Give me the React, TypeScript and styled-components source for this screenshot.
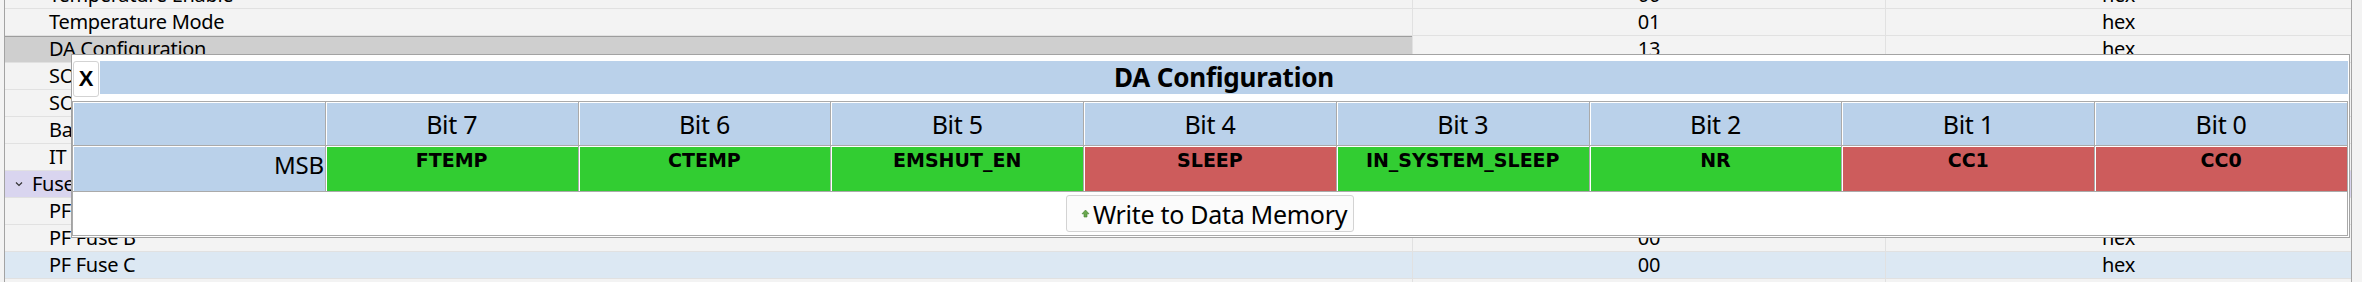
import React from 'react';
import styled, { createGlobalStyle } from 'styled-components';

const GlobalStyle = createGlobalStyle`
    html, body {
        margin: 0;
        padding: 0;
    }
    body {
        background: #f3f3f3;
        font-family: 'Noto Sans', 'Open Sans', sans-serif;
        color: #000;
        overflow: hidden;
    }
`;

const Page = styled.div`
    position: relative;
    width: 2362px;
    height: 282px;
    overflow: hidden;
    background: #f3f3f3;
`;

const Grid = styled.div`
    margin: -18px 0 0 4px;
    width: 2348px;
    box-sizing: border-box;
    border-left: 1px solid #a3a3a3;
    border-right: 1px solid #a3a3a3;
`;

type RowKind = 'plain' | 'group' | 'alt';

const rowBg: Record<RowKind, string> = {
    plain: '#f3f3f3',
    group: '#d9d5ef',
    alt: '#dce8f3',
};

const Row = styled.div<{ $kind: RowKind }>`
    display: grid;
    grid-template-columns: 1407px 473px 1fr;
    height: 27px;
    box-sizing: border-box;
    border-bottom: 1px solid #e1e1e1;
    background: ${(p) => rowBg[p.$kind]};
    font-size: 20px;
    line-height: 26px;
    letter-spacing: -0.3px;
`;

const NameCell = styled.div<{ $selected?: boolean }>`
    padding-left: 44px;
    white-space: nowrap;
    overflow: hidden;
    background: ${(p) => (p.$selected ? '#cfcfcf' : 'transparent')};
    box-shadow: ${(p) => (p.$selected ? 'inset 0 1px 0 #9d9d9d' : 'none')};
`;

const GroupCell = styled.div`
    display: flex;
    align-items: center;
    gap: 9px;
    padding-left: 10px;
    white-space: nowrap;
`;

const ValueCell = styled.div`
    text-align: center;
    border-left: 1px solid #e1e1e1;
`;

const Popup = styled.div`
    position: absolute;
    left: 71px;
    top: 54px;
    width: 2279px;
    box-sizing: border-box;
    border: 1px solid #a3a3a3;
    background: #fff;
    padding: 6px 1px 1px 0;
`;

const TitleRow = styled.div`
    display: flex;
    align-items: flex-start;
    gap: 1px;
    height: 36px;
`;

const CloseButton = styled.button`
    width: 26px;
    height: 36px;
    margin-left: 1px;
    padding: 0;
    border: 1px solid #d3d3d3;
    border-radius: 3px;
    background: #fff;
    font-family: 'Liberation Sans', Arial, sans-serif;
    font-weight: bold;
    font-size: 22px;
    line-height: 34px;
    color: #000;
`;

const TitleBar = styled.div`
    flex: 1;
    height: 33px;
    background: #bad1ea;
    text-align: center;
    font-weight: bold;
    font-size: 26px;
    line-height: 33px;
    letter-spacing: -0.2px;
`;

const BitTable = styled.table`
    margin-top: 4px;
    width: 2276px;
    table-layout: fixed;
    border-collapse: collapse;
`;

const TableRow = styled.tr<{ $h: number }>`
    height: ${(p) => p.$h}px;
`;

const HeadCell = styled.td`
    padding: 0;
    border: 1px solid #aaaaaa;
    background: #bad1ea;
    text-align: center;
    font-size: 25px;
    letter-spacing: -0.3px;
    box-shadow: inset 1px 1px 0 #fff;
`;

const SideCell = styled(HeadCell)`
    text-align: right;
    padding-right: 1px;
    padding-bottom: 8px;
    font-size: 24px;
`;

const FlagCell = styled.td<{ $on: boolean }>`
    padding: 3px 0 0;
    border: 1px solid #aaaaaa;
    background: ${(p) => (p.$on ? '#32cd32' : '#cd5c5c')};
    vertical-align: top;
    text-align: center;
    font-family: 'DejaVu Sans', Verdana, sans-serif;
    font-weight: bold;
    font-size: 19px;
    box-shadow: inset 1px 1px 0 #fff;
`;

const ActionCell = styled.td`
    padding: 0;
    border: 1px solid #aaaaaa;
    text-align: center;
    vertical-align: middle;
`;

const WriteButton = styled.button`
    display: inline-flex;
    align-items: center;
    gap: 3px;
    height: 37px;
    padding: 0 6px 0 14px;
    border: 1px solid #d3d3d3;
    border-radius: 3px;
    background: #fbfbfb;
    font-family: 'Noto Sans', 'Open Sans', sans-serif;
    font-size: 25px;
    letter-spacing: -0.3px;
    color: #000;
`;

type GridRow = {
    name: string;
    value?: string;
    type?: string;
    kind?: RowKind;
    selected?: boolean;
    group?: boolean;
};

const rows: GridRow[] = [
    { name: 'Temperature Enable', value: '00', type: 'hex' },
    { name: 'Temperature Mode', value: '01', type: 'hex' },
    { name: 'DA Configuration', value: '13', type: 'hex', selected: true },
    { name: 'SOC1 Set Threshold', value: '96', type: 'hex' },
    { name: 'SOC1 Clear Threshold', value: 'AF', type: 'hex' },
    { name: 'Battery Low %', value: '00', type: 'hex' },
    { name: 'IT Enable', value: '00', type: 'hex' },
    { name: 'Fuses', kind: 'group', group: true },
    { name: 'PF Fuse A', value: '00', type: 'hex' },
    { name: 'PF Fuse B', value: '00', type: 'hex' },
    { name: 'PF Fuse C', value: '00', type: 'hex', kind: 'alt' },
    { name: 'PF Fuse D', value: '00', type: 'hex' },
];

const bits = [
    { label: 'FTEMP', on: true },
    { label: 'CTEMP', on: true },
    { label: 'EMSHUT_EN', on: true },
    { label: 'SLEEP', on: false },
    { label: 'IN_SYSTEM_SLEEP', on: true },
    { label: 'NR', on: true },
    { label: 'CC1', on: false },
    { label: 'CC0', on: false },
];

const Chevron = () => (
    <svg width="8" height="6" viewBox="0 0 8 6">
        <path d="M1 1.5 L4 4.5 L7 1.5" fill="none" stroke="#333" strokeWidth="1.2" />
    </svg>
);

const UpArrow = () => (
    <svg width="9" height="9" viewBox="0 0 9 9">
        <path d="M4.5 1 L8 4.8 L6 4.8 L6 8 L3 8 L3 4.8 L1 4.8 Z" fill="#6aa84f" stroke="#3f7f2a" strokeWidth="0.6" />
    </svg>
);

export default function App() {
    return (
        <Page>
            <GlobalStyle />
            <Grid>
                {rows.map((r) => (
                    <Row key={r.name} $kind={r.kind ?? 'plain'}>
                        {r.group ? (
                            <GroupCell>
                                <Chevron />
                                {r.name}
                            </GroupCell>
                        ) : (
                            <NameCell $selected={r.selected}>{r.name}</NameCell>
                        )}
                        <ValueCell>{r.value}</ValueCell>
                        <ValueCell>{r.type}</ValueCell>
                    </Row>
                ))}
            </Grid>
            <Popup>
                <TitleRow>
                    <CloseButton>X</CloseButton>
                    <TitleBar>DA Configuration</TitleBar>
                </TitleRow>
                <BitTable>
                    <tbody>
                        <TableRow $h={44}>
                            <HeadCell />
                            {bits.map((b, i) => (
                                <HeadCell key={b.label}>Bit {7 - i}</HeadCell>
                            ))}
                        </TableRow>
                        <TableRow $h={46}>
                            <SideCell>MSB</SideCell>
                            {bits.map((b) => (
                                <FlagCell key={b.label} $on={b.on}>
                                    {b.label}
                                </FlagCell>
                            ))}
                        </TableRow>
                        <TableRow $h={44}>
                            <ActionCell colSpan={9}>
                                <WriteButton>
                                    <UpArrow />
                                    Write to Data Memory
                                </WriteButton>
                            </ActionCell>
                        </TableRow>
                    </tbody>
                </BitTable>
            </Popup>
        </Page>
    );
}
